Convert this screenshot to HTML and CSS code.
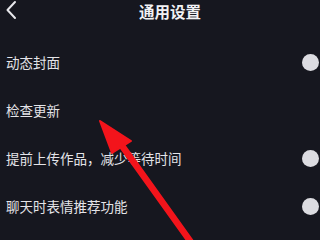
FILE: index.html
```html
<!DOCTYPE html>
<html lang="zh-CN">
  <head>
    <meta charset="UTF-8" />
    <meta name="viewport" content="width=device-width, initial-scale=1.0" />
    <title>通用设置</title>
    <link rel="stylesheet" href="styles.css">
  </head>

  <body>
    <div class="page">
      <header class="topbar">
        <svg class="back" width="12" height="20" viewBox="0 0 12 20">
          <path d="M10 2 L2.5 10 L10 18" fill="none" stroke="#e8e8ec" stroke-width="2" stroke-linecap="round" stroke-linejoin="round" />
        </svg>
        <h1 class="title">通用设置</h1>
      </header>

      <ul class="settings">
        <li class="row">
          <span class="label">动态封面</span>
          <span class="knob"></span>
        </li>
        <li class="row">
          <span class="label">检查更新</span>
        </li>
        <li class="row">
          <span class="label">提前上传作品，减少等待时间</span>
          <span class="knob"></span>
        </li>
        <li class="row">
          <span class="label">聊天时表情推荐功能</span>
          <span class="knob"></span>
        </li>
      </ul>

      <svg class="arrow" width="320" height="240" viewBox="0 0 320 240">
        <line x1="120" y1="143" x2="198" y2="252" stroke="#f3141b" stroke-width="6.5" stroke-linecap="round" />
        <polygon points="100,121 131,141 112,153" fill="#f3141b" stroke="#f3141b" stroke-width="2" stroke-linejoin="round" />
      </svg>
    </div>
  </body>
</html>
```

FILE: styles.css
```css
body {
  margin: 0;
  padding: 0;
  background-color: #16171f;
  font-family: "Noto Sans CJK SC", "Noto Sans", sans-serif;
}

.page {
  position: relative;
  width: 320px;
  height: 240px;
  overflow: hidden;
  background-color: #16171f;
}

.topbar {
  position: relative;
  height: 22px;
  display: flex;
  align-items: center;
  justify-content: center;
  padding-left: 20px;
}

.back {
  position: absolute;
  left: 5px;
  top: 0;
}

.title {
  margin: 0;
  font-size: 15.5px;
  font-weight: bold;
  color: #f2f2f4;
  line-height: 22px;
}

.settings {
  list-style: none;
  margin: 16px 0 0;
  padding: 0;
}

.row {
  height: 48px;
  display: flex;
  align-items: center;
  justify-content: space-between;
  padding: 0 1px 0 6px;
}

.label {
  font-size: 13.5px;
  color: #e4e4e8;
}

.knob {
  width: 17px;
  height: 17px;
  border-radius: 50%;
  background-color: #dcdce1;
}

.arrow {
  position: absolute;
  left: 0;
  top: 0;
}
```
